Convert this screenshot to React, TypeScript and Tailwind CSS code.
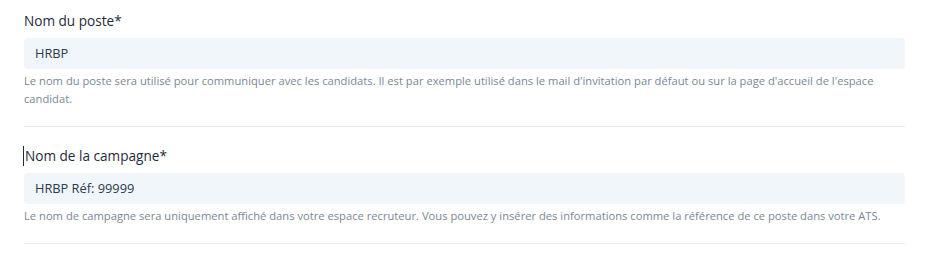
const fields = [
  {
    label: 'Nom du poste*',
    value: 'HRBP',
    help: "Le nom du poste sera utilisé pour communiquer avec les candidats. Il est par exemple utilisé dans le mail d'invitation par défaut ou sur la page d'accueil de l'espace candidat.",
    caret: false,
  },
  {
    label: 'Nom de la campagne*',
    value: 'HRBP Réf: 99999',
    help: 'Le nom de campagne sera uniquement affiché dans votre espace recruteur. Vous pouvez y insérer des informations comme la référence de ce poste dans votre ATS.',
    caret: true,
  },
]

export default function App() {
  return (
    <div className="w-[930px] h-[261px] bg-white pl-6 pr-[25px] font-['Open_Sans',sans-serif]">
      {fields.map((f, i) => (
        <div
          key={f.label}
          className={`border-b border-[#e8eaed] pb-[18px] ${i === 0 ? 'pt-[11px]' : 'pt-[19px]'}`}
        >
          <label className="relative block text-[13.6px] leading-5 font-medium text-[#1f2b3a]">
            {f.caret && <span className="absolute -left-px top-0 h-[20px] w-px bg-[#1f2b3a]" />}
            <span className={f.caret ? 'pl-[1px]' : ''}>{f.label}</span>
          </label>
          <div className="mt-[7px] flex h-[31px] items-center rounded-[4px] bg-[#f1f6fa] pl-[11px] text-[12.8px] text-[#2b3a4b]">
            {f.value}
          </div>
          <p className="mt-[3px] pr-2 text-[11.2px] leading-[18px] text-[#7a8896]">{f.help}</p>
        </div>
      ))}
    </div>
  )
}
